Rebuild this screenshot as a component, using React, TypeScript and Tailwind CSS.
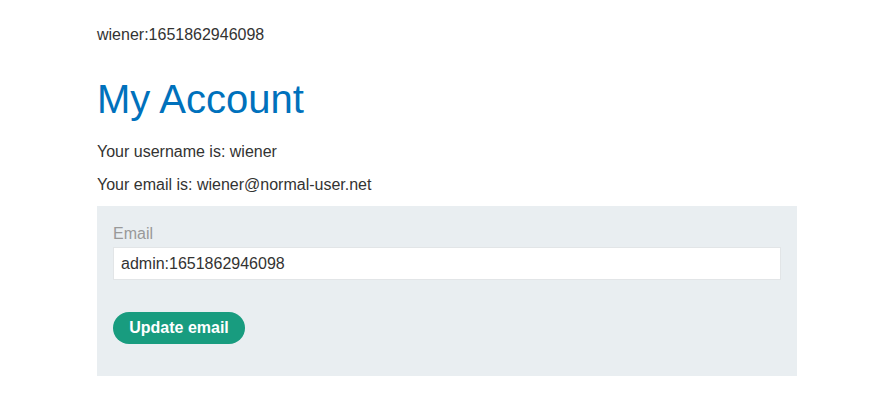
export default function App() {
  return (
    <div className="min-h-[408px] bg-white font-['Liberation_Sans',Arial,sans-serif] text-[16px] text-[#333332]">
      <div className="ml-[97px] w-[700px] pt-[26px]">
        <div className="leading-[18px]">wiener:1651862946098</div>
        <h1 className="mt-[31px] text-[40px] leading-[48px] text-[#0071bc]">My Account</h1>
        <p className="mt-[20px] leading-[18px]">Your username is: wiener</p>
        <p className="mt-[15px] leading-[18px]">Your email is: wiener@normal-user.net</p>
        <form className="mt-[12px] flex flex-col bg-[#e9eef1] px-[16px] pb-[32px] pt-[19px]">
          <label className="leading-[18px] text-[#999999]">Email</label>
          <input
            className="mt-[4px] h-[33px] border border-[#e2e5e7] bg-white px-[7px] text-[16px] text-[#333332] outline-none"
            defaultValue="admin:1651862946098"
          />
          <button
            type="button"
            className="mt-[32px] h-[32px] w-[132px] rounded-full bg-[#189c7f] text-[16px] font-bold text-white"
          >
            Update email
          </button>
        </form>
      </div>
    </div>
  );
}
